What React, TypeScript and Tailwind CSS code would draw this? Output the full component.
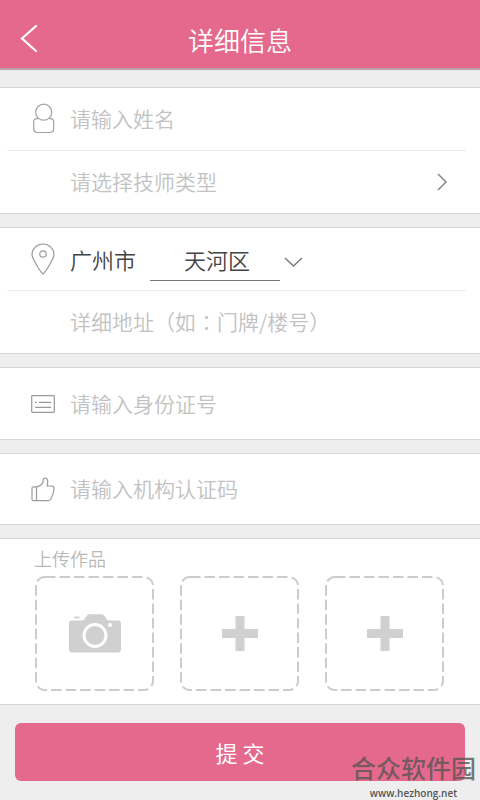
import type { ReactNode } from "react";

const UserIcon = () => (
  <svg width="24" height="32" viewBox="0 0 24 32" fill="none" stroke="#a3a3a3" strokeWidth="1.2">
    <circle cx="12.7" cy="9.2" r="8" />
    <path d="M7 15.6H6Q2.700 15.6 2.700 19V25.5Q2.700 29.5 6.700 29.5H18.500Q22.700 29.500 22.700 25.500V19Q22.700 15.600 19.500 15.600H18.300" />
  </svg>
);

const PinIcon = () => (
  <svg width="24" height="32" viewBox="0 0 24 32" fill="none" stroke="#9a9a9a" strokeWidth="1.2">
    <path d="M12 31Q9 28.500 4.800 20.500C2.500 16.200 1 14 1 11.500A11 10.500 0 0 1 23 11.500C23 14 21.500 16.200 19.200 20.500Q15 28.500 12 31Z" />
    <circle cx="12" cy="11" r="3.200" />
  </svg>
);

const CardIcon = () => (
  <svg width="24" height="18" viewBox="0 0 24 18" fill="none" stroke="#9a9a9a" strokeWidth="1.2">
    <rect x="0.700" y="0.700" width="22.600" height="16.600" rx="0.800" />
    <path d="M4 7.300H6M8 7.300H20M4 12.300H20" />
  </svg>
);

const ThumbIcon = () => (
  <svg width="24" height="25" viewBox="0 0 24 25" fill="none" stroke="#9a9a9a" strokeWidth="1.2" strokeLinejoin="round">
    <path d="M5.500 9.800H2.500Q1 9.800 1 11.300V22.200Q1 23.700 2.500 23.700H17Q18.800 23.700 19.700 22.200Q22.800 16.800 23 11.800Q23 9 20.500 9H16Q17.300 4.600 16.300 2.300Q15 .300 12.800 1.600Q12 2.200 12 5.300Q10.500 9 5.500 9.800ZM5.500 9.800V23.500" />
  </svg>
);

const CameraIcon = () => (
  <svg width="52" height="39" viewBox="0 0 52 39" fill="#d0d0d0">
    <path d="M6 2.500H10.500V4.500H5ZM3 6.500H13Q14.500 6.500 15.600 5L17.500 2Q18.600 .200 20.500 .200H32.500Q34.500 .200 35.500 2L37.500 5Q38.500 6.500 40.500 6.500H49Q52 6.500 52 9.500V35.500Q52 38.500 49 38.500H3Q0 38.500 0 35.500V9.500Q0 6.500 3 6.500Z" />
    <circle cx="26" cy="21.500" r="11" fill="#d0d0d0" stroke="#fff" strokeWidth="3" />
    <circle cx="41" cy="11" r="2" fill="#fff" />
  </svg>
);

const PlusIcon = () => (
  <svg width="36" height="35" viewBox="0 0 36 35" fill="#d0d0d0">
    <path d="M13.500 0H22.500V13H36V22H22.500V35H13.500V22H0V13H13.500Z" />
  </svg>
);

const uploads = [
  { label: "拍照上传", icon: CameraIcon },
  { label: "添加作品二", icon: PlusIcon },
  { label: "添加作品三", icon: PlusIcon },
];

const Panel = ({ children }: { children: ReactNode }) => (
  <section className="border-y border-[#d6d6d6] bg-white">{children}</section>
);

const Row = ({ icon, children }: { icon?: ReactNode; children: ReactNode }) => (
  <div className="flex h-full items-center pl-[31px] pr-8">
    <span className="flex w-[39px] shrink-0 items-center">{icon}</span>
    {children}
  </div>
);

const Field = ({ label, type = "text" }: { label: string; type?: string }) => (
  <input
    type={type}
    aria-label={label}
    placeholder={label}
    className="min-w-0 flex-1 bg-transparent text-[21px] font-[350] text-[#444] outline-none placeholder:text-[#c2c2c2]"
  />
);

const Divider = () => <hr className="ml-[7px] mr-[14px] border-[#ebebeb]" />;

const App = () => {
  return (
    <div className="relative min-h-screen bg-[#eeeeee] font-['Noto_Sans_CJK_SC',sans-serif]">
      <header className="grid h-[70px] grid-cols-[60px_1fr_60px] items-center border-b-2 border-[#b9a2a9] bg-[#e5698d] pt-3">
        <button type="button" aria-label="返回" className="pl-5">
          <svg width="19" height="30" viewBox="0 0 19 30" fill="none" stroke="#fff" strokeWidth="2.200" strokeLinecap="round">
            <path d="M16 1L2 13.500L16 26" />
          </svg>
        </button>
        <h1 className="text-center text-[26px] font-[350] leading-8 text-white">详细信息</h1>
      </header>

      <form className="mt-[17px] flex flex-col gap-[13px]" onSubmit={(e) => e.preventDefault()}>
        <Panel>
          <div className="h-[62px]">
            <Row icon={<UserIcon />}>
              <Field label="请输入姓名" />
            </Row>
          </div>
          <Divider />
          <div className="h-[62px]">
            <Row>
              <button type="button" className="flex flex-1 items-center justify-between text-[21px] font-[350] text-[#c2c2c2]">
                请选择技师类型
                <svg width="12" height="18" viewBox="0 0 12 18" fill="none" stroke="#858585" strokeWidth="1.500">
                  <path d="M2 1L10 9L2 17" />
                </svg>
              </button>
            </Row>
          </div>
        </Panel>

        <Panel>
          <div className="h-[62px]">
            <Row icon={<PinIcon />}>
              <label htmlFor="district" className="text-[22px] font-[350] text-[#444]">
                广州市
              </label>
              <select
                id="district"
                defaultValue="天河区"
                className="ml-[14px] mt-1 h-[40px] w-[130px] appearance-none border-b border-[#777] bg-transparent pb-[2px] pl-1 text-center text-[22px] font-[350] text-[#444] outline-none [text-align-last:center]"
              >
                <option>天河区</option>
              </select>
              <svg className="ml-1 mt-[6px] shrink-0" width="19" height="12" viewBox="0 0 19 12" fill="none" stroke="#777" strokeWidth="1.300">
                <path d="M1 2L9.500 10L18 2" />
              </svg>
            </Row>
          </div>
          <Divider />
          <div className="h-[62px] font-['Noto_Sans_CJK_TC',sans-serif]">
            <Row>
              <Field label="详细地址（如：门牌/楼号）" />
            </Row>
          </div>
        </Panel>

        <Panel>
          <div className="h-[71px]">
            <Row icon={<CardIcon />}>
              <Field label="请输入身份证号" />
            </Row>
          </div>
        </Panel>

        <Panel>
          <div className="h-[70px]">
            <Row icon={<ThumbIcon />}>
              <Field label="请输入机构认证码" />
            </Row>
          </div>
        </Panel>

        <Panel>
          <div className="pb-[13px] pt-[7px]">
            <h2 className="pl-[34px] text-[18px] font-[350] leading-6 text-[#b8b8b8]">上传作品</h2>
            <div className="mt-[6px] grid grid-cols-3 gap-[26px] pl-[35px] pr-9">
              {uploads.map((item) => (
                <button
                  key={item.label}
                  type="button"
                  aria-label={item.label}
                  className="relative flex h-[115px] items-center justify-center"
                >
                  {/* long dashes round the slot */}
                  <svg className="absolute inset-0 h-full w-full" fill="none" stroke="#cccccc" strokeWidth="2">
                    <rect x="1" y="1" rx="9" className="h-[calc(100%-2px)] w-[calc(100%-2px)]" strokeDasharray="10.500 4" />
                  </svg>
                  <item.icon />
                </button>
              ))}
            </div>
          </div>
        </Panel>

        <div className="px-[15px] pb-5 pt-[5px]">
          <button type="submit" className="h-[58px] w-full rounded-md bg-[#e5698d] text-[22px] text-white">
            提 交
          </button>
        </div>
      </form>

      <div className="pointer-events-none absolute bottom-0 right-1 text-center">
        <p className="font-['Liberation_Sans','Noto_Sans_CJK_SC',sans-serif] text-[25px] font-medium leading-8 text-[#555]/80">合众软件园</p>
        <p className="font-['Open_Sans',sans-serif] text-[10px] font-semibold leading-4 text-[#555]">www.hezhong.net</p>
      </div>
    </div>
  );
};

export default App;
